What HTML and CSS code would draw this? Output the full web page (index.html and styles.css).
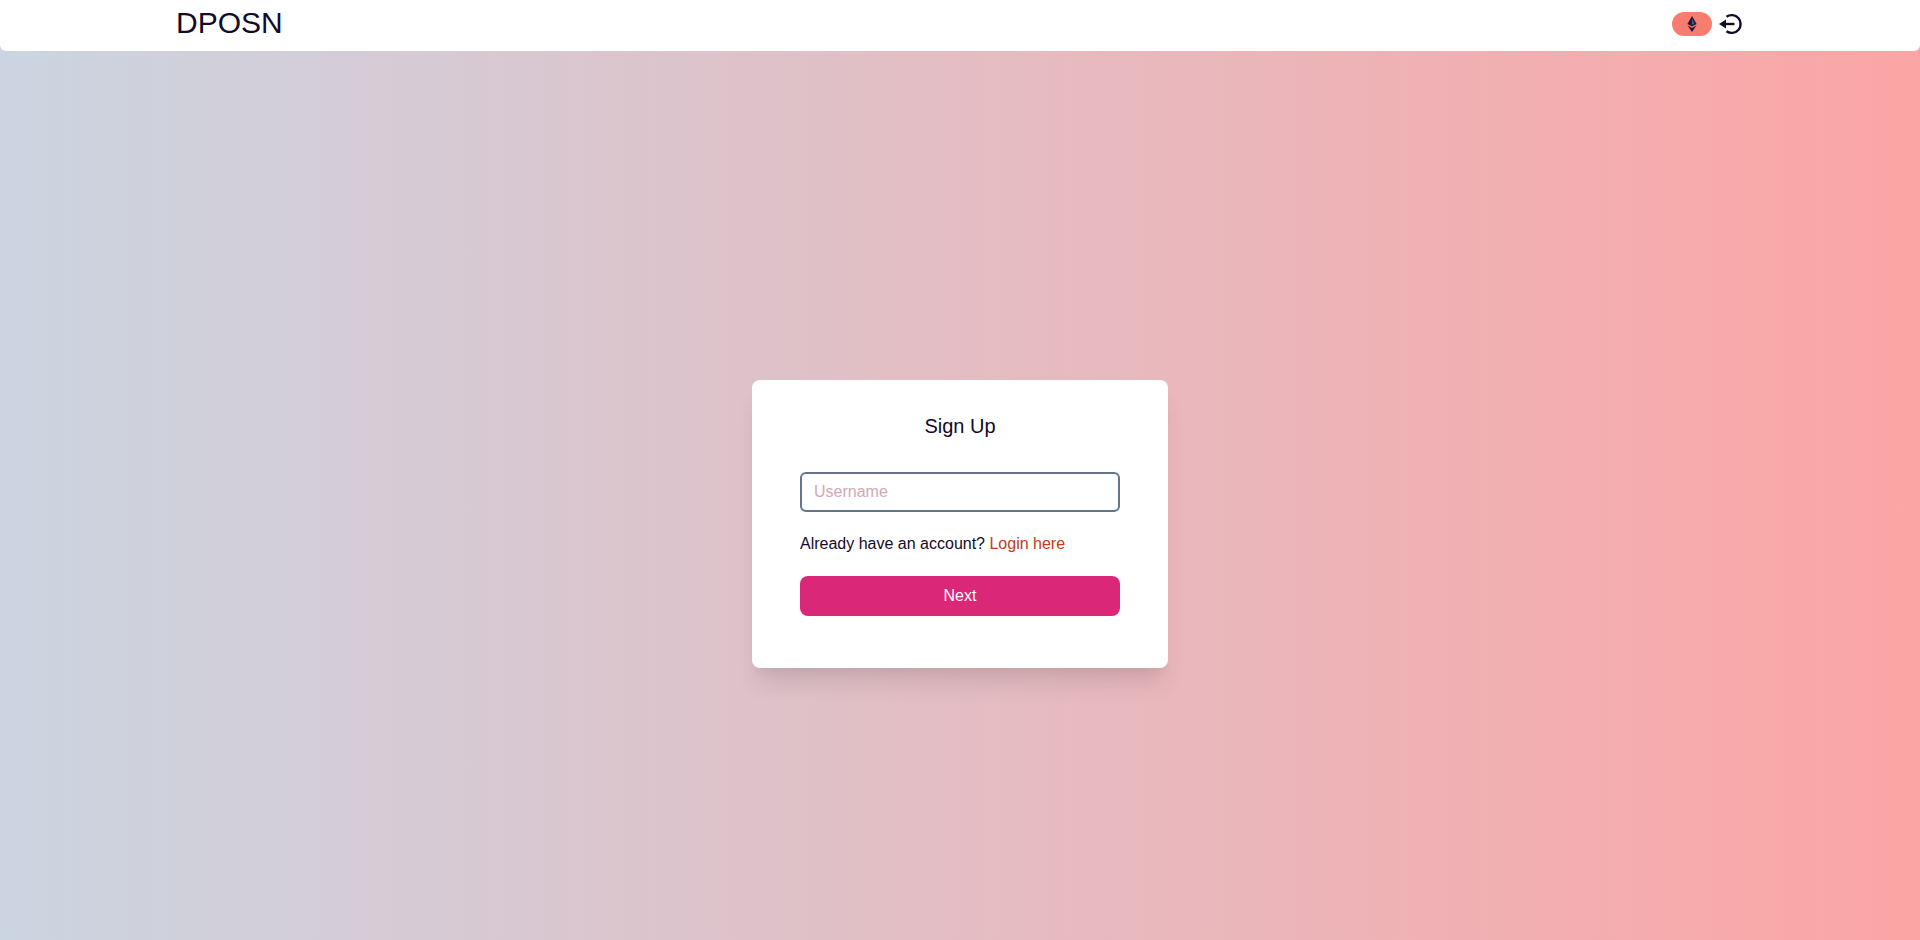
FILE: index.html
```html
<!DOCTYPE html>
<html lang="en">
<head>
  <meta charset="UTF-8" />
  <meta name="viewport" content="width=device-width, initial-scale=1.0" />
  <title>DPOSN</title>
  <link rel="stylesheet" href="styles.css">
</head>
<body>
  <nav class="navbar">
    <div class="brand">DPOSN</div>
    <div class="nav-actions">
      <div class="eth-pill">
        <svg class="eth-icon" viewBox="0 0 10 16" width="10" height="16">
          <path d="M5 0 L9.6 8 L5 10.6 L0.4 8 Z" fill="#1e1b3a" />
          <path d="M0.6 9.4 L5 12 L9.4 9.4 L5 16 Z" fill="#1e1b3a" />
          <path d="M5 2.5 L7.4 7.6 L5 9 Z" fill="#4b5a7a" />
        </svg>
      </div>
      <svg class="logout-icon" viewBox="0 0 28 28" width="28" height="28" fill="none" stroke="#140a2a" stroke-width="2.4">
        <path d="M10.5 6.8 A8.9 8.9 0 1 1 10.5 21.2" />
        <path d="M18.5 14 H8" />
        <path d="M10 9.5 L3 14 L10 18.5 Z" fill="#140a2a" stroke="none" />
      </svg>
    </div>
  </nav>

  <main class="page">
    <div class="card">
      <h2 class="card-title">Sign Up</h2>
      <input class="text-input" type="text" placeholder="Username" />
      <p class="switch-text">Already have an account? <a class="switch-link" href="#">Login here</a></p>
      <button class="next-btn">Next</button>
    </div>
  </main>
</body>
</html>
```

FILE: styles.css
```css
* {
  box-sizing: border-box;
  font-family: 'Liberation Sans', Arial, sans-serif;
}
body {
  margin: 0;
  height: 100vh;
  overflow: hidden;
  display: flex;
  flex-direction: column;
  color: #140a2a;
  background: linear-gradient(to right, #cbd5e1, #fca5a5);
}
.navbar {
  height: 51px;
  flex-shrink: 0;
  background: #fff;
  border-radius: 0 0 6px 6px;
  display: flex;
  justify-content: space-between;
  align-items: center;
  padding: 0 176px 3px;
}
.brand {
  font-size: 30px;
  line-height: 36px;
  margin-bottom: 2px;
}
.nav-actions {
  display: flex;
  align-items: center;
  gap: 4px;
}
.eth-pill {
  width: 40px;
  height: 24px;
  border-radius: 12px;
  background: #f87c70;
  display: flex;
  justify-content: center;
  align-items: center;
}
.logout-icon {
  display: block;
}
.page {
  flex: 1;
  display: flex;
  justify-content: center;
  align-items: flex-start;
  padding-top: 329px;
}
.card {
  width: 416px;
  height: 288px;
  padding: 32px 48px 0;
  background: #fff;
  border-radius: 8px;
  box-shadow: 0 20px 25px -5px rgba(0,0,0,0.1), 0 10px 10px -5px rgba(0,0,0,0.04);
}
.card-title {
  margin: 0 0 32px;
  font-size: 20px;
  line-height: 28px;
  font-weight: 400;
  text-align: center;
}
.text-input {
  display: block;
  width: 100%;
  height: 40px;
  padding: 0 12px;
  border: 2px solid #64748b;
  border-radius: 6px;
  background: #fff;
  font-size: 16px;
  outline: none;
}
.text-input::placeholder {
  color: #cfa8b6;
}
.switch-text {
  margin: 22px 0;
  font-size: 16px;
  line-height: 20px;
}
.switch-link {
  color: #c5391c;
  text-decoration: none;
}
.next-btn {
  display: block;
  width: 100%;
  height: 40px;
  border: none;
  border-radius: 8px;
  background: #db2777;
  color: #fff;
  font-size: 16px;
  cursor: pointer;
}
```
